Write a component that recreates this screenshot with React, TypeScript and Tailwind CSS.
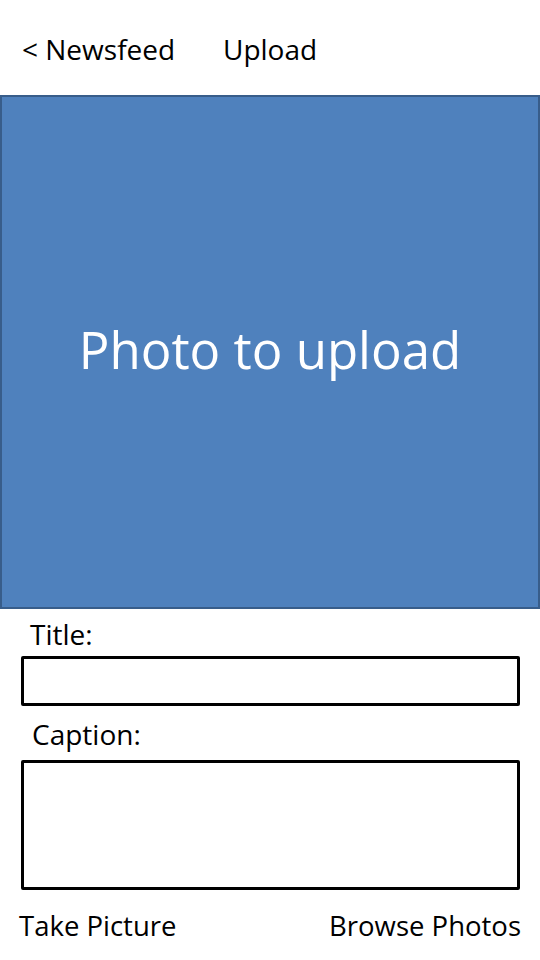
import React from "react";

export default function App() {
  return (
    <div className="w-[540px] h-[960px] bg-white text-black font-['Open_Sans',sans-serif] overflow-hidden">
      <div className="h-[95px] flex items-center pl-[22px] pt-[2px] text-[28px] leading-none">
        <span className="w-[201px]">&lt; Newsfeed</span>
        <span>Upload</span>
      </div>
      <div className="h-[514px] bg-[#4f81bd] border-2 border-[#385d8a] flex items-center justify-center">
        <span className="text-white text-[51px] leading-none pb-[6px]">Photo to upload</span>
      </div>
      <div className="pl-[21px] pr-[20px] pt-[9px]">
        <div className="pl-[9px] text-[28px] leading-[33px]">Title:</div>
        <div className="mt-[5px] h-[50px] border-[3px] border-black rounded-[2px]"></div>
        <div className="pl-[11px] mt-[12px] text-[28px] leading-[33px]">Caption:</div>
        <div className="mt-[9px] h-[130px] border-[3px] border-black rounded-[2px]"></div>
        <div className="mt-[20px] flex justify-between text-[27.5px] leading-[32px] -ml-[2px] -mr-[1px]">
          <span>Take Picture</span>
          <span>Browse Photos</span>
        </div>
      </div>
    </div>
  );
}
